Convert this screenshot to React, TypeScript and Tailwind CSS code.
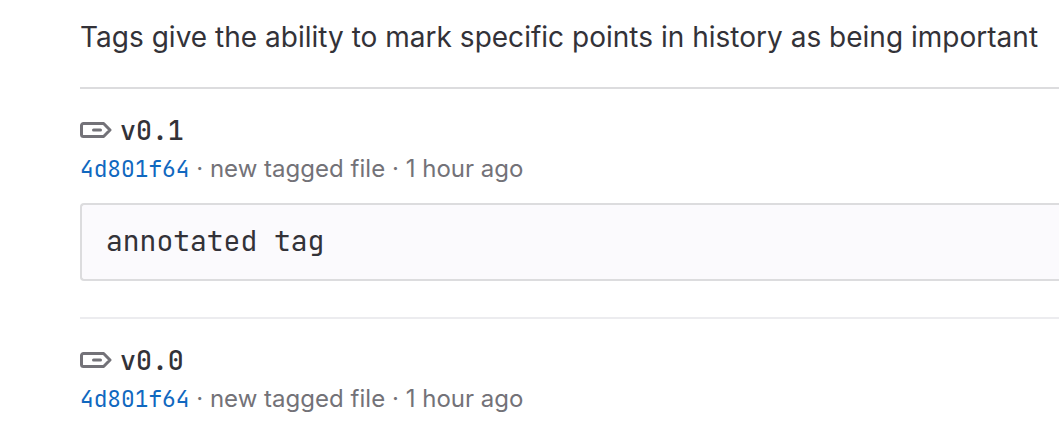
const TagIcon = () => (
  <svg width="32" height="32" viewBox="0 0 32 32" fill="none" className="shrink-0 text-[#737278]">
    <path d="M3.5 9.5H23.6L30 16L23.6 22.5H3.5A2 2 0 0 1 1.5 20.5V11.5A2 2 0 0 1 3.5 9.5Z" stroke="currentColor" strokeWidth="3" strokeLinejoin="round" />
    <path d="M13.5 16H20.5" stroke="currentColor" strokeWidth="3" strokeLinecap="round" />
  </svg>
);

const Tag = ({ name }: { name: string }) => (
  <div>
    <div className="flex h-[38px] items-center">
      <TagIcon />
      <span className="ml-2 pt-0.5 font-['JetBrains_Mono','Liberation_Mono',monospace] text-[26.6px] font-medium">{name}</span>
    </div>
    <div className="mt-px flex h-[38px] items-center whitespace-pre text-[24px] text-[#737278]">
      <span className="font-['JetBrains_Mono','Liberation_Mono',monospace] text-[22.8px] text-[#1068bf]">4d801f64</span>
      <span className="tracking-[0.02px]"> · new tagged file · 1 hour ago</span>
    </div>
  </div>
);

export default function App() {
  return (
    <main className="h-[444px] w-[1059px] overflow-hidden bg-white pl-20 font-['Inter',sans-serif] text-[#333238]">
      <p className="h-[87px] whitespace-nowrap pt-[17px] text-[28px] leading-[40px] tracking-[0.015px]">
        Tags give the ability to mark specific points in history as being important
      </p>
      <section className="border-t-2 border-[#dcdcde] pt-[22px]">
        <Tag name="v0.1" />
        <pre className="mt-[15px] h-[78px] rounded-l-[4px] border-2 border-r-0 border-[#dcdcde] bg-[#fbfafd] pl-6 font-['JetBrains_Mono','Liberation_Mono',monospace] text-[28px] leading-[72px]">annotated tag</pre>
      </section>
      <section className="mt-9 border-t-2 border-[#ececef] pt-[22px]">
        <Tag name="v0.0" />
      </section>
    </main>
  );
}
